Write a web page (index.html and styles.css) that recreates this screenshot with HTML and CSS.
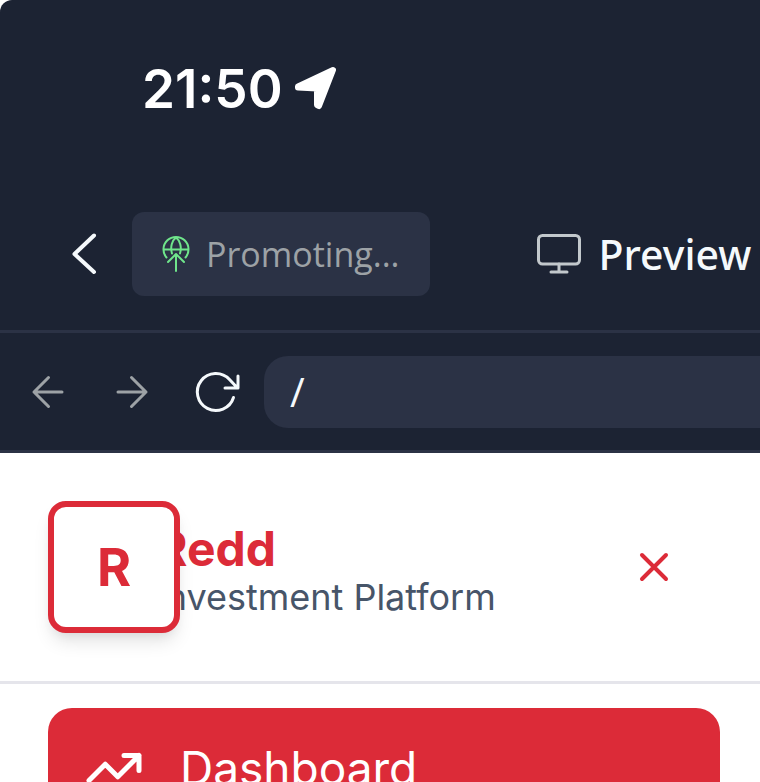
FILE: index.html
```html
<!DOCTYPE html>
<html lang="en">
<head>
<meta charset="utf-8">
<meta name="viewport" content="width=device-width, initial-scale=1">
<title>Preview</title>
<link rel="stylesheet" href="styles.css">
</head>
<body>
<div class="screen">
  <header class="chrome">
    <div class="status">
      <time>21:50</time>
      <svg class="location" width="44" height="44" viewBox="0 0 44 44" aria-hidden="true"><path d="M39 3 4 19.500V20.500L23 21.500V38L25 39Z"/></svg>
    </div>
    <div class="toolbar">
      <button class="icon-button back" type="button" aria-label="Back">
        <svg class="line" width="24" height="42" viewBox="0 0 24 42"><path d="M22 2.500 2.500 21 22 39"/></svg>
      </button>
      <button class="deploy" type="button">
        <svg class="globe" width="28" height="36" viewBox="0 0 28 36" aria-hidden="true"><path d="M4.500 21.500A12.500 12.500 0 1 1 23.500 21.500M1.500 13.500H26.500M10 17.500C8 11 10 4.500 14 1.500C18 4.500 20 11 18 17.500M14 35V18M6 26 14 18 22 26"/></svg>
        <span>Promoting...</span>
      </button>
      <button class="preview" type="button">
        <svg class="monitor" width="44" height="40" viewBox="0 0 44 40" aria-hidden="true"><rect x="1.500" y="1.500" width="41" height="28.500" rx="4"/><path d="M22 30V38M14 38H30"/></svg>
        <span>Preview</span>
      </button>
    </div>
    <div class="address">
      <button class="icon-button muted" type="button" aria-label="Previous page">
        <svg class="line" width="32" height="32" viewBox="0 0 32 32"><path d="M30 16H2M16.500 1.500 2 16 16.500 30.500"/></svg>
      </button>
      <button class="icon-button muted" type="button" aria-label="Next page">
        <svg class="line" width="32" height="32" viewBox="0 0 32 32"><path d="M2 16H30M15.500 1.500 30 16 15.500 30.500"/></svg>
      </button>
      <button class="icon-button" type="button" aria-label="Reload">
        <svg class="line" width="44" height="40" viewBox="0 0 44 40"><path d="M39.500 25.500A18.500 18.500 0 1 1 35.500 7.500L43.500 16M44 4V16H31"/></svg>
      </button>
      <input class="url" type="text" value="/" aria-label="Page address">
    </div>
  </header>
  <main class="app">
    <div class="brand-bar">
      <div class="brand">
        <div class="logo">R</div>
        <div class="brand-text">
          <h1>Redd</h1>
          <p>Investment Platform</p>
        </div>
      </div>
      <button class="close" type="button" aria-label="Close menu">
        <svg class="line" width="28" height="28" viewBox="0 0 28 28"><path d="M2 2 26 26M26 2 2 26"/></svg>
      </button>
    </div>
    <nav class="menu">
      <a class="menu-item" href="#dashboard">
        <svg width="60" height="60" viewBox="0 0 24 24" aria-hidden="true"><path d="m22 7-8.500 8.500-5-5L2 17M16 7h6v6"/></svg>
        <span>Dashboard</span>
      </a>
    </nav>
  </main>
</div>
</body>
</html>
```
FILE: styles.css
```css
:root {
  --chrome: #1c2333;
  --chrome-raised: #2b3245;
  --chrome-text: #f5f9fc;
  --red: #dc2b38;
}

* { box-sizing: border-box; }

body {
  margin: 0;
  background: #fff;
  font-family: Inter, "Liberation Sans", sans-serif;
}

button {
  padding: 0;
  border: 0;
  background: none;
  color: inherit;
  font: inherit;
}

svg { display: block; flex: none; overflow: visible; }

.screen {
  height: 100vh;
  overflow: hidden;
}

.chrome {
  background: var(--chrome);
  color: var(--chrome-text);
  border-top-left-radius: 12px;
  font-family: "Open Sans", "Noto Sans", sans-serif;
}

.status {
  display: flex;
  align-items: center;
  gap: 11px;
  height: 178px;
  padding-left: 142px;
  color: #fff;
  font: 600 53px/64px Inter, sans-serif;
}

.location {
  fill: currentColor;
  stroke: currentColor;
  stroke-width: 6;
  stroke-linejoin: round;
}

.line {
  fill: none;
  stroke: currentColor;
  stroke-width: 3;
  stroke-linecap: round;
  stroke-linejoin: round;
}

.toolbar {
  display: flex;
  align-items: center;
  height: 155px;
  padding-left: 72px;
  border-bottom: 3px solid var(--chrome-raised);
}

.back { margin-right: 36px; }
.back .line { stroke-width: 4; }

.deploy {
  display: flex;
  align-items: center;
  gap: 16px;
  height: 84px;
  padding: 0 30px;
  border-radius: 12px;
  background: var(--chrome-raised);
  color: #9da2a6;
  font-size: 34px;
}

.globe {
  fill: none;
  stroke: #6fe58b;
  stroke-width: 2;
  stroke-linecap: round;
  stroke-linejoin: round;
}

.preview {
  display: flex;
  align-items: center;
  gap: 18px;
  margin-left: 107px;
  font-family: "Noto Sans", sans-serif;
  font-size: 41px;
  font-weight: 500;
}

.monitor {
  fill: none;
  stroke: #c2c8cc;
  stroke-width: 3;
  stroke-linecap: round;
}

.address {
  display: flex;
  align-items: center;
  height: 120px;
  padding-left: 6px;
  border-bottom: 3px solid var(--chrome-raised);
}

.icon-button {
  display: flex;
  align-items: center;
  justify-content: center;
}

.address .icon-button { width: 84px; height: 72px; }
.muted { color: #9da2a6; }

.url {
  flex: 1;
  min-width: 0;
  height: 72px;
  margin-left: 6px;
  padding: 0 26px;
  border: 0;
  border-radius: 24px 0 0 24px;
  background: var(--chrome-raised);
  color: inherit;
  font: 40px "Open Sans", sans-serif;
}

.brand-bar {
  display: flex;
  align-items: center;
  justify-content: space-between;
  padding: 48px 92px 48px 48px;
  border-bottom: 3px solid #e5e5eb;
}

.brand { display: flex; align-items: center; }

.logo {
  position: relative;
  display: flex;
  align-items: center;
  justify-content: center;
  width: 132px;
  height: 132px;
  border: 6px solid var(--red);
  border-radius: 18px;
  background: #fff;
  box-shadow: 0 12px 18px -3px rgb(0 0 0 / 10%), 0 6px 12px -6px rgb(0 0 0 / 10%);
  color: var(--red);
  font-size: 52px;
  font-weight: 700;
}

.brand-text { margin-left: -24px; padding-top: 12px; }

h1 {
  margin: 0;
  color: var(--red);
  font-size: 48px;
  line-height: 48px;
}

p {
  margin: 0;
  color: #475569;
  font-size: 36px;
  line-height: 48px;
}

.close { color: var(--red); }
.close .line { stroke-width: 4; }

.menu { padding: 24px 40px 24px 48px; }

.menu-item {
  display: flex;
  align-items: center;
  gap: 36px;
  height: 120px;
  padding: 0 36px;
  border-radius: 24px;
  background: var(--red);
  color: #fff;
  font-size: 46px;
  text-decoration: none;
}

.menu-item svg {
  fill: none;
  stroke: currentColor;
  stroke-width: 2;
  stroke-linecap: round;
  stroke-linejoin: round;
}
```
